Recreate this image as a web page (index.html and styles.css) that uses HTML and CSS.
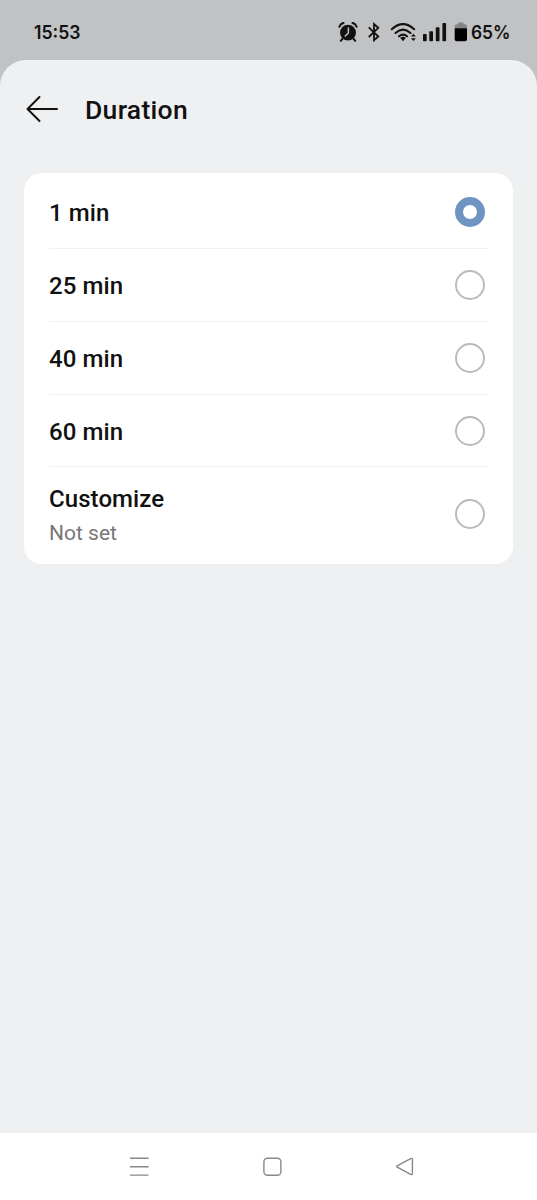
FILE: index.html
```html
<!DOCTYPE html>
<html lang="en">
<head>
<meta charset="utf-8">
<title>Duration</title>
<link rel="stylesheet" href="styles.css">
</head>
<body>
<div class="screen">
  <header class="status">
    <span class="clock"><svg class="label" width="48" height="24"><text x="0" y="18.5" textLength="46.5" lengthAdjust="spacingAndGlyphs">15:53</text></svg></span>
    <div class="indicators">
      <svg width="136" height="64" viewBox="334 0 136 64" aria-hidden="true">
        <g fill="none" stroke="#111" stroke-linecap="round">
          <circle cx="348" cy="32.7" r="7.9" fill="#111" stroke="none"/>
          <path d="M339.4 26.8Q340.4 23.6 343.6 22.9M352.4 22.9Q355.6 23.6 356.6 26.8" stroke-width="2"/>
          <path d="M342.8 38.3L340.8 40.8M353.2 38.3L355.2 40.8" stroke-width="2"/>
          <path d="M348.4 28V33L345.2 36" stroke="#c1c2c4" stroke-width="1.5"/>
          <path d="M369.3 27.8L378.3 36.5L374 40.2V24L378.3 27.8L369.3 36.5" stroke-width="1.8" stroke-linejoin="miter"/>
          <path d="M391.8 29.2Q403 19.2 414.2 29.2M395.5 33Q403 26.4 410.5 33M399 36.3Q403 32.9 407 36.3" stroke-width="2.1"/>
        </g>
        <g fill="#111">
          <path d="M400.2 37.8Q403 35.6 405.8 37.8L403 41.2Z"/>
          <path d="M411 36.6L413.4 33.8L415.8 36.6ZM411 38.2H415.8L413.4 41Z"/>
          <rect x="423" y="34" width="3.7" height="7.3" rx=".8"/>
          <rect x="429.3" y="31.3" width="3.7" height="10" rx=".8"/>
          <rect x="435.8" y="27.2" width="3.7" height="14.1" rx=".8"/>
          <rect x="442.4" y="23" width="3.7" height="18.3" rx=".8"/>
        </g>
        <path d="M454.7 28.4V26.4Q454.7 24.2 457 24.2H458V22.4H463.5V24.2H464.7Q467 24.2 467 26.4V28.4Z" fill="#858688"/>
        <path d="M454.7 28.2H467V39.3Q467 41.3 465 41.3H456.7Q454.7 41.3 454.7 39.3Z" fill="#000"/>
      </svg>
      <svg class="label" width="42" height="24"><text x="1" y="19" textLength="39.5" lengthAdjust="spacingAndGlyphs">65%</text></svg>
    </div>
  </header>
  <main class="sheet">
    <div class="titlebar">
      <svg width="32" height="28" viewBox="0 0 32 28" fill="none" stroke="#111" stroke-width="2" stroke-linecap="round" stroke-linejoin="round" aria-hidden="true"><path d="M31 14H1.5M13.5 2L1.5 14L13.5 26"/></svg>
      <h1>Duration</h1>
    </div>
    <section class="card">
      <div class="row"><span>1 min</span><i class="radio on"></i></div>
      <div class="row"><span>25 min</span><i class="radio"></i></div>
      <div class="row"><span>40 min</span><i class="radio"></i></div>
      <div class="row last-preset"><span>60 min</span><i class="radio"></i></div>
      <div class="row tall"><div class="custom"><span>Customize</span><small>Not set</small></div><i class="radio"></i></div>
    </section>
  </main>
  <nav class="nav">
    <svg width="20" height="22" viewBox="0 0 20 22" fill="none" stroke="#888" stroke-width="1.4"><path d="M1 2.3H19.5M1 10.7H19.5M1 19.1H19.5"/></svg>
    <svg width="20" height="22" viewBox="0 0 20 22" fill="none" stroke="#888" stroke-width="1.4"><rect x="1.9" y="2.2" width="17" height="17" rx="3.5"/></svg>
    <svg width="20" height="22" viewBox="0 0 20 22" fill="none" stroke="#888" stroke-width="1.4" stroke-linejoin="round"><path d="M2.2 9.8L15.6 2.6Q17.4 1.8 17.4 3.6V17.4Q17.4 19.2 15.6 18.3L2.2 11.2Q1 10.5 2.2 9.8Z"/></svg>
  </nav>
</div>
</body>
</html>
```
FILE: styles.css
```css
* { box-sizing: border-box; }
body {
  margin: 0;
  background: #c1c2c4;
  color: #111;
  font-family: Roboto, sans-serif;
}
.screen {
  display: flex;
  flex-direction: column;
  height: 1200px;
  overflow: hidden;
}
.status {
  display: flex;
  justify-content: space-between;
  align-items: center;
  height: 60px;
  padding: 4px 25px 0 34px;
}
.indicators { display: flex; align-items: center; }
.status svg { display: block; }
.label { overflow: visible; fill: #111; font: 600 18px Inter, sans-serif; }
.sheet {
  flex: 1;
  padding: 0 24.5px 0 24px;
  border-radius: 26px 26px 0 0;
  background: #eff0f2;
}
.titlebar {
  display: flex;
  align-items: center;
  gap: 27px;
  height: 113px;
  padding: 0 0 15px 2px;
}
h1 {
  margin: 0;
  padding-top: 1px;
  font-size: 26.5px;
  font-weight: 500;
  line-height: 32px;
  letter-spacing: .3px;
}
.card {
  height: 391.4px;
  padding: 3px 24.5px 0 25px;
  border-radius: 18px;
  background: #fff;
}
.row {
  display: flex;
  align-items: center;
  justify-content: space-between;
  height: 73px;
  border-bottom: 1px solid #f1f1f1;
  font-size: 24px;
  font-weight: 500;
  letter-spacing: .08px;
}
.row > span { padding-top: 2px; }
.last-preset { height: 72px; }
.tall { height: 94px; border: 0; }
.custom { display: flex; flex-direction: column; gap: 5px; padding-top: 4px; }
.custom span { line-height: 29px; }
small { color: #777; font-size: 21px; font-weight: 400; line-height: 28px; letter-spacing: 0; }
.radio {
  width: 30px;
  height: 30px;
  margin-right: 3px;
  border: 2px solid #bbb;
  border-radius: 50%;
}
.radio.on { border: 8px solid #6f94c4; }
.nav {
  display: flex;
  gap: 113px;
  height: 67px;
  padding: 23px 0 0 129px;
  background: #fff;
}
```
